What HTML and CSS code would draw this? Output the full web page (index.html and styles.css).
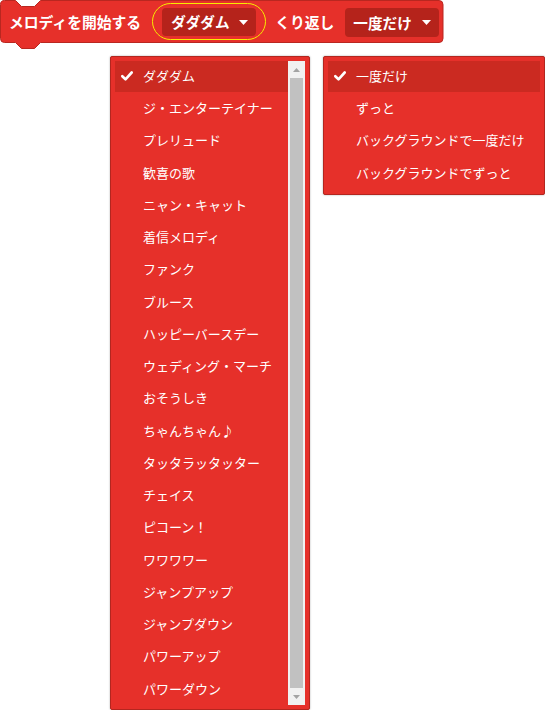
FILE: index.html
```html
<!DOCTYPE html>
<html lang="ja">
<head>
<meta charset="utf-8">
<link rel="stylesheet" href="styles.css">
</head>
<body>
<div class="block">
  <svg class="block-shape" width="446" height="52" viewBox="0 0 446 52">
    <path d="M0.5,4.5 A4,4 0 0 1 4.5,0.5 H15.5 L21.5,6.5 H34.5 L40.5,0.5 H439 A4,4 0 0 1 443,4.5 V38.5 A4,4 0 0 1 439,42.5 H40.5 L34.5,48.5 H21.5 L15.5,42.5 H4.5 A4,4 0 0 1 0.5,38.5 Z" fill="#e6302a" stroke="#b92720" stroke-width="1"/>
  </svg>
  <span class="label">メロディを開始する</span>
  <span class="field field-active">
    <span class="field-text">ダダダム</span>
    <svg class="arrow" width="9" height="5" viewBox="0 0 9 5"><path d="M0,0 H9 L4.5,5 Z" fill="#fff"/></svg>
    <span class="ring"></span>
  </span>
  <span class="label label-mid">くり返し</span>
  <span class="field field-second">
    <span class="field-text">一度だけ</span>
    <svg class="arrow" width="9" height="5" viewBox="0 0 9 5"><path d="M0,0 H9 L4.5,5 Z" fill="#fff"/></svg>
  </span>
</div>

<div class="menu menu-songs">
  <ul class="list">
    <li class="item selected"><svg class="check" width="12" height="10" viewBox="0 0 12 10"><path d="M1.3,5.2 L4.5,8.3 L10.7,1.5" fill="none" stroke="#fff" stroke-width="2.6" stroke-linecap="round" stroke-linejoin="round"/></svg>ダダダム</li>
    <li class="item">ジ・エンターテイナー</li>
    <li class="item">プレリュード</li>
    <li class="item">歓喜の歌</li>
    <li class="item">ニャン・キャット</li>
    <li class="item">着信メロディ</li>
    <li class="item">ファンク</li>
    <li class="item">ブルース</li>
    <li class="item">ハッピーバースデー</li>
    <li class="item">ウェディング・マーチ</li>
    <li class="item">おそうしき</li>
    <li class="item">ちゃんちゃん♪</li>
    <li class="item">タッタラッタッター</li>
    <li class="item">チェイス</li>
    <li class="item">ピコーン！</li>
    <li class="item">ワワワワー</li>
    <li class="item">ジャンプアップ</li>
    <li class="item">ジャンプダウン</li>
    <li class="item">パワーアップ</li>
    <li class="item">パワーダウン</li>
  </ul>
  <div class="scrollbar">
    <div class="sb-btn"><svg width="7" height="4" viewBox="0 0 7 4"><path d="M0,4 H7 L3.5,0 Z" fill="#a3a3a3"/></svg></div>
    <div class="sb-thumb"></div>
    <div class="sb-btn"><svg width="7" height="4" viewBox="0 0 7 4"><path d="M0,0 H7 L3.5,4 Z" fill="#a3a3a3"/></svg></div>
  </div>
</div>

<div class="menu menu-repeat">
  <ul class="list">
    <li class="item selected"><svg class="check" width="12" height="10" viewBox="0 0 12 10"><path d="M1.3,5.2 L4.5,8.3 L10.7,1.5" fill="none" stroke="#fff" stroke-width="2.6" stroke-linecap="round" stroke-linejoin="round"/></svg>一度だけ</li>
    <li class="item">ずっと</li>
    <li class="item">バックグラウンドで一度だけ</li>
    <li class="item">バックグラウンドでずっと</li>
  </ul>
</div>
</body>
</html>
```

FILE: styles.css
```css
html, body {
  margin: 0;
  padding: 0;
  background: #ffffff;
}

body {
  width: 545px;
  height: 710px;
  overflow: hidden;
  position: relative;
  font-family: "Noto Sans CJK JP", "Noto Sans", sans-serif;
  color: #ffffff;
}

.block {
  position: relative;
  display: flex;
  align-items: center;
  width: 443px;
  height: 43px;
  box-sizing: border-box;
  padding-left: 9px;
}

.block-shape {
  position: absolute;
  left: 0;
  top: 0;
  z-index: 0;
}

.label {
  position: relative;
  z-index: 1;
  font-size: 14.8px;
  font-weight: 700;
  line-height: 20px;
  white-space: nowrap;
}

.label-mid {
  margin-left: 19px;
}

.field {
  position: relative;
  z-index: 1;
  display: flex;
  align-items: center;
  width: 94px;
  height: 28px;
  box-sizing: border-box;
  padding-left: 9px;
  background: #b5231b;
  border-radius: 4px;
  margin-top: 1px;
}

.field-active {
  margin-left: 21px;
}

.field-second {
  margin-left: 11px;
  padding-left: 8px;
  height: 29px;
  margin-top: 2px;
}

.field-text {
  font-size: 14.6px;
  font-weight: 700;
  line-height: 20px;
  white-space: nowrap;
  width: 58px;
}

.field-second .field-text {
  width: 54px;
}

.arrow {
  margin-left: 10px;
}

.field-second .arrow {
  margin-left: 15px;
}

.ring {
  position: absolute;
  left: -10px;
  right: -10px;
  top: -5px;
  bottom: -4px;
  border: 1.5px solid #f7ec00;
  border-radius: 20px;
}

.menu {
  position: absolute;
  top: 56px;
  display: flex;
  box-sizing: border-box;
  padding: 4px;
  background: #e6302a;
  border: 1px solid #b3261f;
  box-shadow: 0 0 2px rgba(0, 0, 0, 0.35);
  border-radius: 2px;
}

.menu-songs {
  left: 110px;
  width: 200px;
  height: 654px;
}

.menu-repeat {
  left: 323px;
  width: 222px;
}

.list {
  list-style: none;
  margin: 0;
  padding: 0;
  flex: 1;
  overflow: hidden;
}

.item {
  position: relative;
  height: 32.25px;
  line-height: 30px;
  padding-left: 28px;
  font-size: 13px;
  white-space: nowrap;
}

.item.selected {
  background: #cb2a21;
  height: 31px;
  line-height: 30px;
  margin-bottom: 1px;
}

.check {
  position: absolute;
  left: 6px;
  top: 10px;
}

.scrollbar {
  width: 17px;
  display: flex;
  flex-direction: column;
  background: #f1f1f1;
}

.sb-btn {
  height: 17px;
  display: flex;
  align-items: center;
  justify-content: center;
}

.sb-thumb {
  flex: 1;
  margin: 0 2px;
  background: #c1c1c1;
}
```
